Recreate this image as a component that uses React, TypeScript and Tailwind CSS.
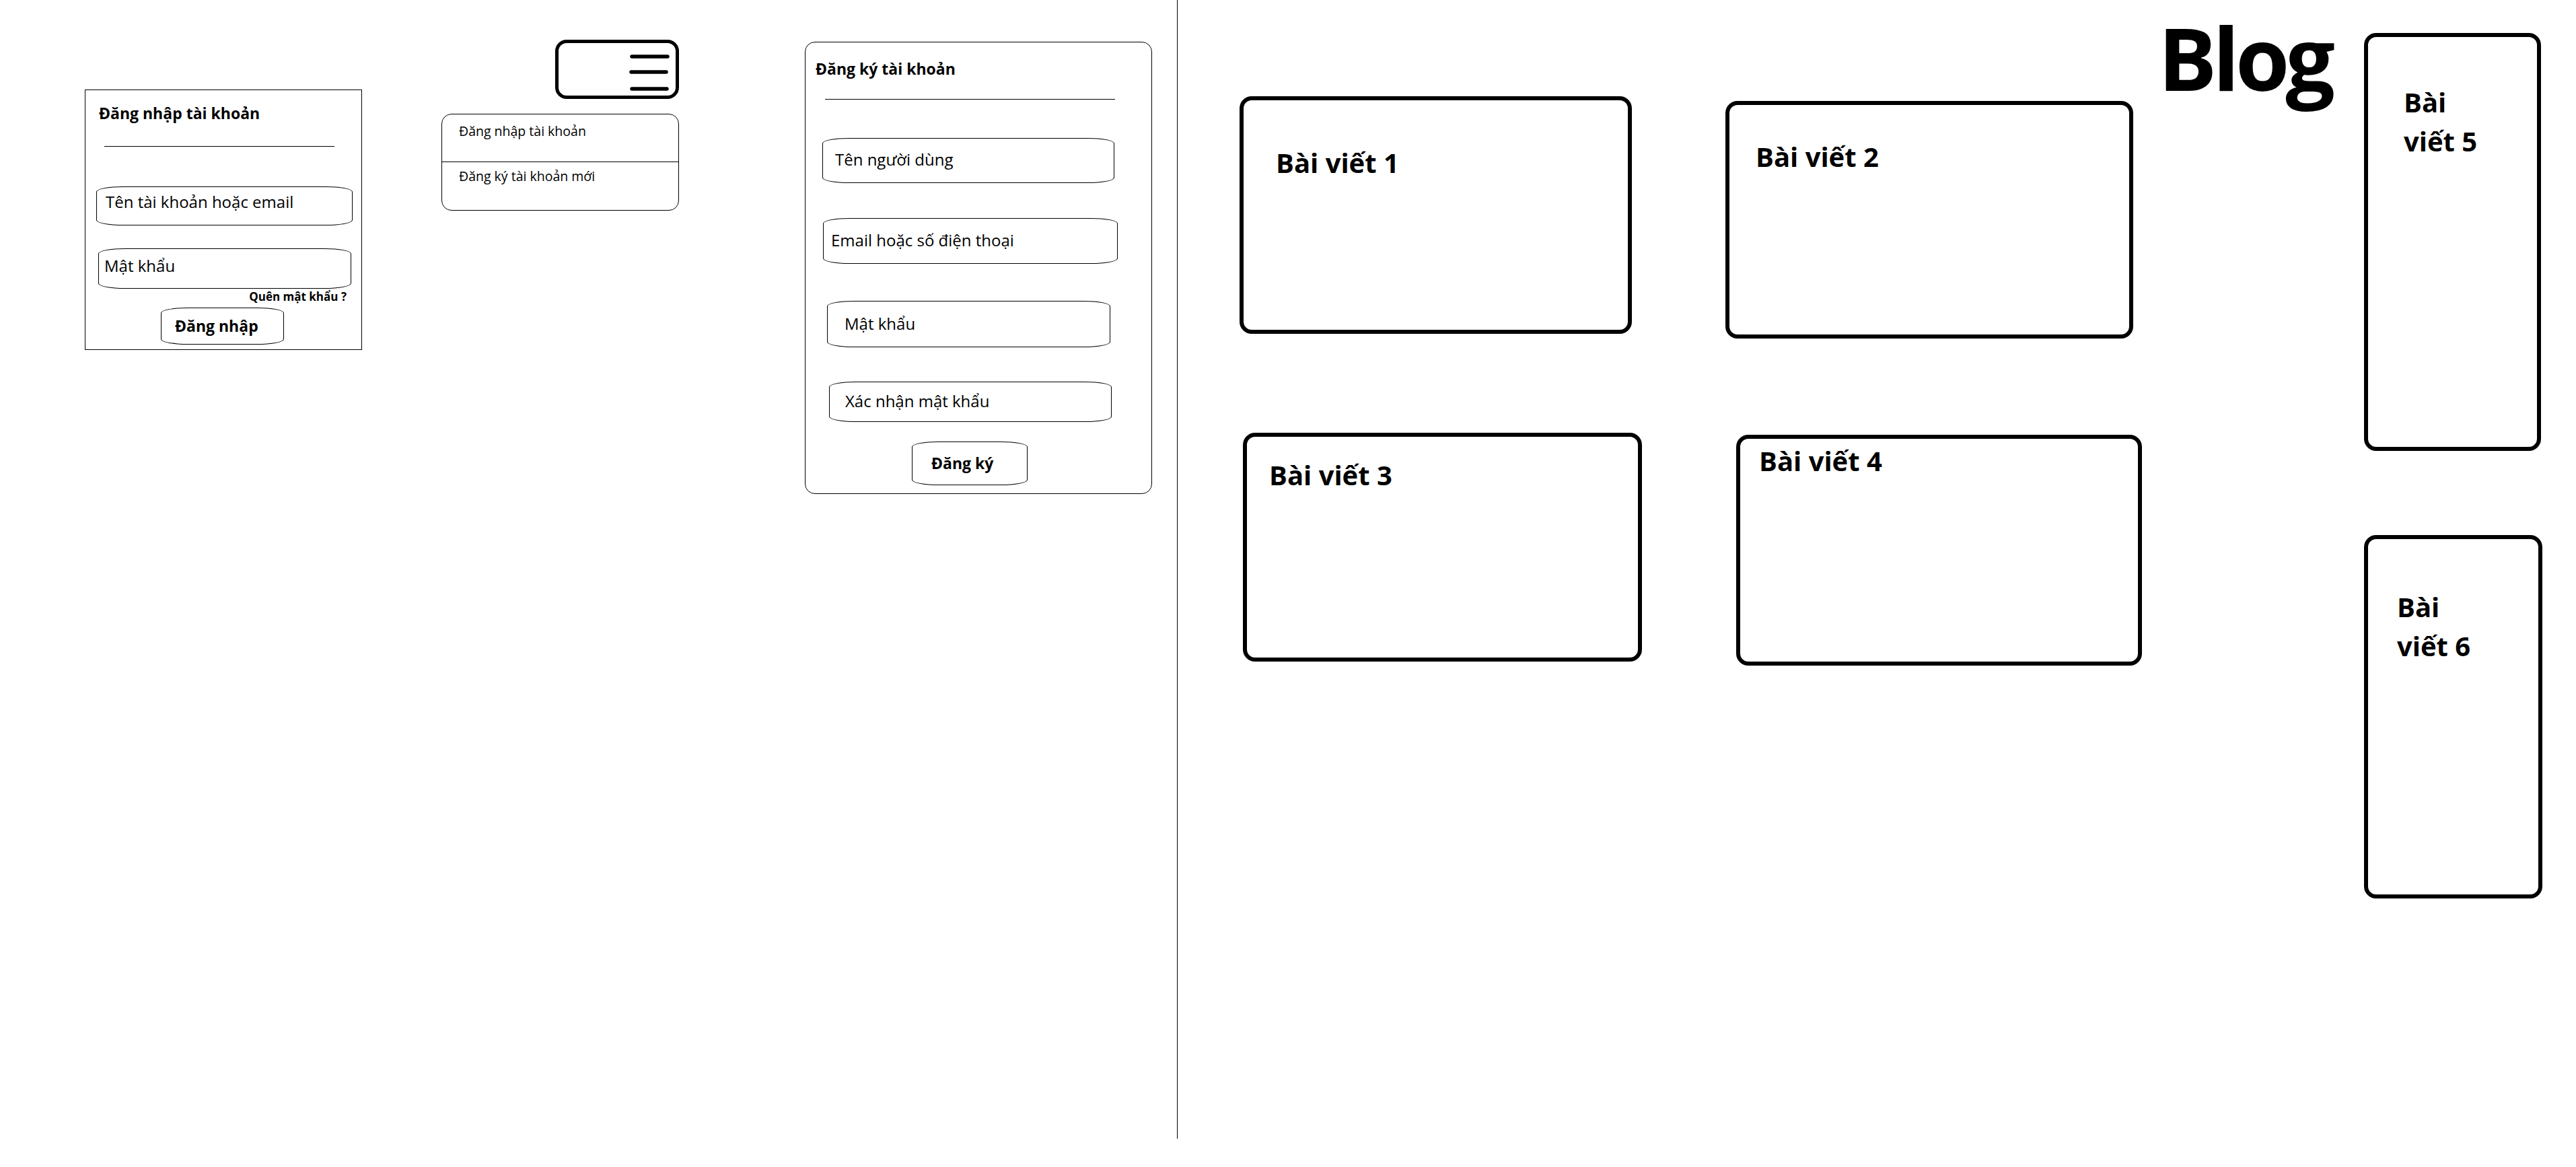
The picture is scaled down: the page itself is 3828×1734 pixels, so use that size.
import React from "react";

const Field: React.FC<{
  className: string;
  textClassName: string;
  children: React.ReactNode;
}> = ({ className, textClassName, children }) => {
  return (
    <div className={["border border-black rounded-[40px/8px]", className].join(" ")}>
      <div className={textClassName}>{children}</div>
    </div>
  );
};

const PostCard: React.FC<{
  className: string;
  innerClassName: string;
  title: string;
}> = ({ className, innerClassName, title }) => {
  return (
    <div className={["border-[6px] border-black rounded-[18px]", className].join(" ")}>
      <div className={["text-[40px] leading-[58px] font-bold", innerClassName].join(" ")}>
        {title}
      </div>
    </div>
  );
};

const LoginBox: React.FC = () => {
  return (
    <div className="ml-[126px] mt-[133px] w-[412px] h-[387px] border border-black flex flex-col items-start">
      <div className="mt-[18px] ml-[20px] text-[23px] leading-[32px] font-bold">
        Đăng nhập tài khoản
      </div>
      <div className="mt-[33px] ml-[28px] w-[342px] h-px bg-black" />
      <Field
        className="mt-[59px] ml-[16px] w-[381px] h-[58px] pt-[6px] pl-[13px]"
        textClassName="text-[24px] leading-[32px]"
      >
        Tên tài khoản hoặc email
      </Field>
      <Field
        className="mt-[34px] ml-[19px] w-[376px] h-[60px] pt-[9px] pl-[8px]"
        textClassName="text-[24px] leading-[32px]"
      >
        Mật khẩu
      </Field>
      <div className="mt-[2px] w-full pr-[22px] text-right text-[17px] leading-[20px] font-bold">
        Quên mật khẩu ?
      </div>
      <Field
        className="mt-[6px] ml-[112px] w-[183px] h-[55px] pt-[10px] pl-[20px]"
        textClassName="text-[23px] leading-[32px] font-bold"
      >
        Đăng nhập
      </Field>
    </div>
  );
};

const MenuPreview: React.FC = () => {
  return (
    <div className="ml-[118px] mt-[59px] w-[353px] flex flex-col items-end">
      <div className="w-[184px] h-[88px] border-[5px] border-black rounded-[17px]">
        <svg width="174" height="78" viewBox="0 0 174 78" className="block">
          <g stroke="black" strokeWidth="5.5" strokeLinecap="round">
            <line x1="109" y1="20" x2="162" y2="20" />
            <line x1="108" y1="43" x2="160" y2="43" />
            <line x1="109" y1="68" x2="161" y2="68" />
          </g>
        </svg>
      </div>
      <div className="mt-[22px] w-full h-[144px] border border-black rounded-[15px] flex flex-col text-[19.5px] leading-[26px]">
        <div className="h-[70px] pt-[12px] pl-[25px]">Đăng nhập tài khoản</div>
        <div className="h-px bg-black" />
        <div className="pt-[8px] pl-[25px]">Đăng ký tài khoản mới</div>
      </div>
    </div>
  );
};

const RegisterBox: React.FC = () => {
  return (
    <div className="ml-[187px] mt-[62px] w-[516px] h-[672px] border border-black rounded-[15px] flex flex-col items-start">
      <div className="mt-[23px] ml-[15px] text-[23px] leading-[32px] font-bold">
        Đăng ký tài khoản
      </div>
      <div className="mt-[29px] ml-[29px] w-[431px] h-px bg-black" />
      <Field
        className="mt-[57px] ml-[25px] w-[434px] h-[67px] pt-[15px] pl-[18px]"
        textClassName="text-[24px] leading-[32px]"
      >
        Tên người dùng
      </Field>
      <Field
        className="mt-[52px] ml-[26px] w-[438px] h-[68px] pt-[16px] pl-[11px]"
        textClassName="text-[24px] leading-[32px]"
      >
        Email hoặc số điện thoại
      </Field>
      <Field
        className="mt-[55px] ml-[32px] w-[421px] h-[69px] pt-[17px] pl-[25px]"
        textClassName="text-[24px] leading-[32px]"
      >
        Mật khẩu
      </Field>
      <Field
        className="mt-[51px] ml-[35px] w-[420px] h-[60px] pt-[12px] pl-[23px]"
        textClassName="text-[24px] leading-[32px]"
      >
        Xác nhận mật khẩu
      </Field>
      <Field
        className="mt-[29px] ml-[158px] w-[172px] h-[65px] pt-[15px] pl-[28px]"
        textClassName="text-[23px] leading-[32px] font-bold"
      >
        Đăng ký
      </Field>
    </div>
  );
};

const App: React.FC = () => {
  return (
    <div className="w-[3828px] h-[1734px] overflow-hidden bg-white text-black font-['Open_Sans',sans-serif] flex items-start">
      <div className="w-[1749px] flex items-start">
        <LoginBox />
        <MenuPreview />
        <RegisterBox />
      </div>
      <div className="w-px h-[1692px] bg-black" />
      <div className="flex items-start">
        <div className="ml-[92px] w-[598px] flex flex-col items-start">
          <PostCard
            className="mt-[143px] w-[583px] h-[353px]"
            innerClassName="pt-[64px] pl-[48px]"
            title="Bài viết 1"
          />
          <PostCard
            className="mt-[147px] ml-[5px] w-[593px] h-[340px]"
            innerClassName="pt-[28px] pl-[33px]"
            title="Bài viết 3"
          />
        </div>
        <div className="ml-[124px] w-[619px] flex flex-col items-start">
          <PostCard
            className="mt-[150px] w-[606px] h-[353px]"
            innerClassName="pt-[48px] pl-[39px]"
            title="Bài viết 2"
          />
          <PostCard
            className="mt-[143px] ml-[16px] w-[603px] h-[343px]"
            innerClassName="pt-[4px] pl-[28px]"
            title="Bài viết 4"
          />
        </div>
        <div className="w-[330px] pl-[24px]">
          <div className="text-[130px] leading-[170px] font-bold tracking-[-6px]">Blog</div>
        </div>
        <div className="w-[265px] flex flex-col items-start">
          <PostCard
            className="mt-[49px] w-[263px] h-[621px]"
            innerClassName="pt-[68px] pl-[53px] max-w-[190px]"
            title="Bài viết 5"
          />
          <PostCard
            className="mt-[125px] w-[265px] h-[540px]"
            innerClassName="pt-[72px] pl-[43px] max-w-[180px]"
            title="Bài viết 6"
          />
        </div>
      </div>
    </div>
  );
};

export default App;
